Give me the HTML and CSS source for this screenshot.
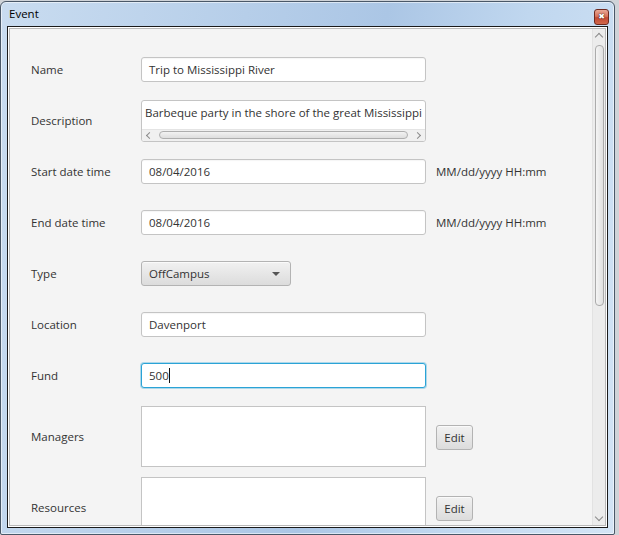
FILE: index.html
```html
<!DOCTYPE html>
<html>
<head>
<meta charset="utf-8">
<title>Event</title>
<link rel="stylesheet" href="styles.css">
</head>
<body>
<div class="window">
  <div class="titlebar">
    <span class="title">Event</span>
    <div class="close"><span>&#x2716;</span></div>
  </div>
  <div class="client">
    <div class="pane">
      <div class="content">
        <div class="form">
          <div class="label">Name</div>
          <div class="field">Trip to Mississippi River</div>
          <div></div>

          <div class="label">Description</div>
          <div class="area">
            <div class="area-text">Barbeque party in the shore of the great Mississippi</div>
            <div class="hscroll">
              <span class="chev chev-l"></span>
              <span class="hthumb"></span>
              <span class="chev chev-r"></span>
            </div>
          </div>
          <div></div>

          <div class="label">Start date time</div>
          <div class="field">08/04/2016</div>
          <div class="hint">MM/dd/yyyy HH:mm</div>

          <div class="label">End date time</div>
          <div class="field">08/04/2016</div>
          <div class="hint">MM/dd/yyyy HH:mm</div>

          <div class="label">Type</div>
          <div class="combo-wrap"><div class="combo"><span>OffCampus</span><span class="arrow"></span></div></div>
          <div></div>

          <div class="label">Location</div>
          <div class="field">Davenport</div>
          <div></div>

          <div class="label">Fund</div>
          <div class="field focused">500<span class="caret"></span></div>
          <div></div>

          <div class="label">Managers</div>
          <div class="list"></div>
          <div><button class="btn">Edit</button></div>

          <div class="label">Resources</div>
          <div class="list"></div>
          <div><button class="btn">Edit</button></div>
        </div>
      </div>
      <div class="vscroll">
        <span class="chev chev-u"></span>
        <div class="vtrack"><span class="vthumb"></span></div>
        <span class="chev chev-d"></span>
      </div>
    </div>
  </div>
</div>
</body>
</html>
```

FILE: styles.css
```css
html, body {
  margin: 0;
  padding: 0;
}
body {
  width: 619px;
  height: 535px;
  overflow: hidden;
  background: #cfd3d8;
  font-family: "Open Sans", "Noto Sans", sans-serif;
  font-size: 11.5px;
  color: #333333;
}
.window {
  box-sizing: border-box;
  width: 615px;
  height: 534px;
  margin-top: 1px;
  border: 1px solid #4a5868;
  border-radius: 6px 6px 2px 2px;
  padding: 0 6px 6px 6px;
  display: flex;
  flex-direction: column;
  background: linear-gradient(100deg, #c9dcf0 0%, #b6cee9 35%, #abc6e5 55%, #c0d7ef 75%, #d3e4f5 100%);
  box-shadow: inset 0 0 0 1px rgba(255,255,255,0.55);
}
.titlebar {
  height: 24px;
  flex: none;
  display: flex;
  align-items: center;
  justify-content: space-between;
}
.title {
  padding-left: 2px;
  margin-top: -1px;
  font-family: "Open Sans", "Noto Sans", sans-serif;
  font-size: 11.5px;
  color: #000000;
}
.close {
  box-sizing: border-box;
  width: 15px;
  height: 16px;
  margin-top: 6px;
  margin-right: -1px;
  border: 1px solid #6e2a20;
  border-radius: 3px;
  background: linear-gradient(#e9a996 0%, #d7735c 45%, #c24a32 55%, #d0674c 100%);
  display: flex;
  align-items: center;
  justify-content: center;
}
.close span {
  font-family: "DejaVu Sans", sans-serif;
  font-size: 8px;
  line-height: 8px;
  color: #ffffff;
  text-shadow: 0 0 1px #3a1510, 0 0 1px #3a1510;
}
.client {
  flex: 1;
  display: flex;
  border: 1px solid #1a1a1a;
  background: #ffffff;
  padding: 1px 1px 1px 1px;
  min-height: 0;
}
.pane {
  flex: 1;
  display: flex;
  border: 1px solid #b9b9b9;
  background: #f4f4f4;
  min-height: 0;
  overflow: hidden;
}
.content {
  flex: 1;
  overflow: hidden;
}
.form {
  display: grid;
  grid-template-columns: 100px 285px auto;
  column-gap: 10px;
  grid-template-rows: repeat(7, 51px) 71px 71px;
  align-items: center;
  padding: 15px 0 0 21px;
}
.label {
  color: #333333;
}
.field {
  box-sizing: border-box;
  height: 25px;
  background: #ffffff;
  border: 1px solid #c4c4c4;
  border-radius: 3px;
  box-shadow: inset 0 1px 1px rgba(0,0,0,0.04);
  padding: 0 7px;
  display: flex;
  align-items: center;
  color: #333333;
}
.field.focused {
  border: 1px solid #2aa3d6;
  box-shadow: 0 0 0 1px rgba(42,163,214,0.35);
}
.caret {
  display: inline-block;
  width: 1px;
  height: 15px;
  background: #111111;
  margin-left: 0;
}
.hint {
  color: #333333;
}
.area {
  box-sizing: border-box;
  height: 42px;
  background: #ffffff;
  border: 1px solid #c4c4c4;
  border-radius: 3px;
  display: flex;
  flex-direction: column;
  overflow: hidden;
}
.area-text {
  flex: 1;
  padding: 4px 0 0 3px;
  white-space: nowrap;
  overflow: hidden;
  color: #333333;
}
.hscroll {
  height: 11px;
  flex: none;
  background: #f0f0f0;
  border-top: 1px solid #e4e4e4;
  display: flex;
  align-items: center;
  padding: 0 3px;
}
.hthumb {
  flex: 1;
  height: 6px;
  margin: 0 7px 0 7px;
  border: 1px solid #aeaeae;
  border-radius: 4px;
  background: linear-gradient(#f2f2f2, #dedede);
}
.chev {
  display: inline-block;
  width: 4px;
  height: 4px;
  border-left: 1px solid #8a8a8a;
  border-bottom: 1px solid #8a8a8a;
  flex: none;
}
.chev-l { transform: rotate(45deg); margin-left: 2px; }
.chev-r { transform: rotate(-135deg); margin-right: 2px; }
.combo-wrap {
  display: flex;
}
.combo {
  box-sizing: border-box;
  width: 150px;
  height: 25px;
  border: 1px solid #b3b3b3;
  border-radius: 3px;
  background: linear-gradient(#f1f1f1, #dcdcdc);
  box-shadow: inset 0 1px 0 #fafafa;
  display: flex;
  align-items: center;
  justify-content: space-between;
  padding: 0 10px 0 7px;
  color: #333333;
}
.arrow {
  width: 0;
  height: 0;
  border-left: 4px solid transparent;
  border-right: 4px solid transparent;
  border-top: 4px solid #555555;
}
.list {
  box-sizing: border-box;
  height: 61px;
  background: #ffffff;
  border: 1px solid #c4c4c4;
}
.btn {
  box-sizing: border-box;
  width: 37px;
  height: 25px;
  padding: 0;
  border: 1px solid #b3b3b3;
  border-radius: 3px;
  background: linear-gradient(#f1f1f1, #dcdcdc);
  box-shadow: inset 0 1px 0 #fafafa;
  font-family: "Open Sans", "Noto Sans", sans-serif;
  font-size: 11.5px;
  color: #333333;
  display: block;
  margin-top: 1px;
}
.vscroll {
  width: 12px;
  flex: none;
  background: #ececec;
  border-left: 1px solid #e2e2e2;
  display: flex;
  flex-direction: column;
  align-items: center;
}
.chev-u {
  transform: rotate(135deg);
  margin-top: 5px;
  width: 5px;
  height: 5px;
}
.chev-d {
  transform: rotate(-45deg);
  margin-bottom: 5px;
  width: 5px;
  height: 5px;
}
.vtrack {
  flex: 1;
  width: 100%;
  display: flex;
  justify-content: center;
  padding-top: 5px;
}
.vthumb {
  box-sizing: border-box;
  width: 9px;
  height: 261px;
  border: 1px solid #ababab;
  border-radius: 4px;
  background: linear-gradient(90deg, #f4f4f4, #e0e0e0);
}
```
